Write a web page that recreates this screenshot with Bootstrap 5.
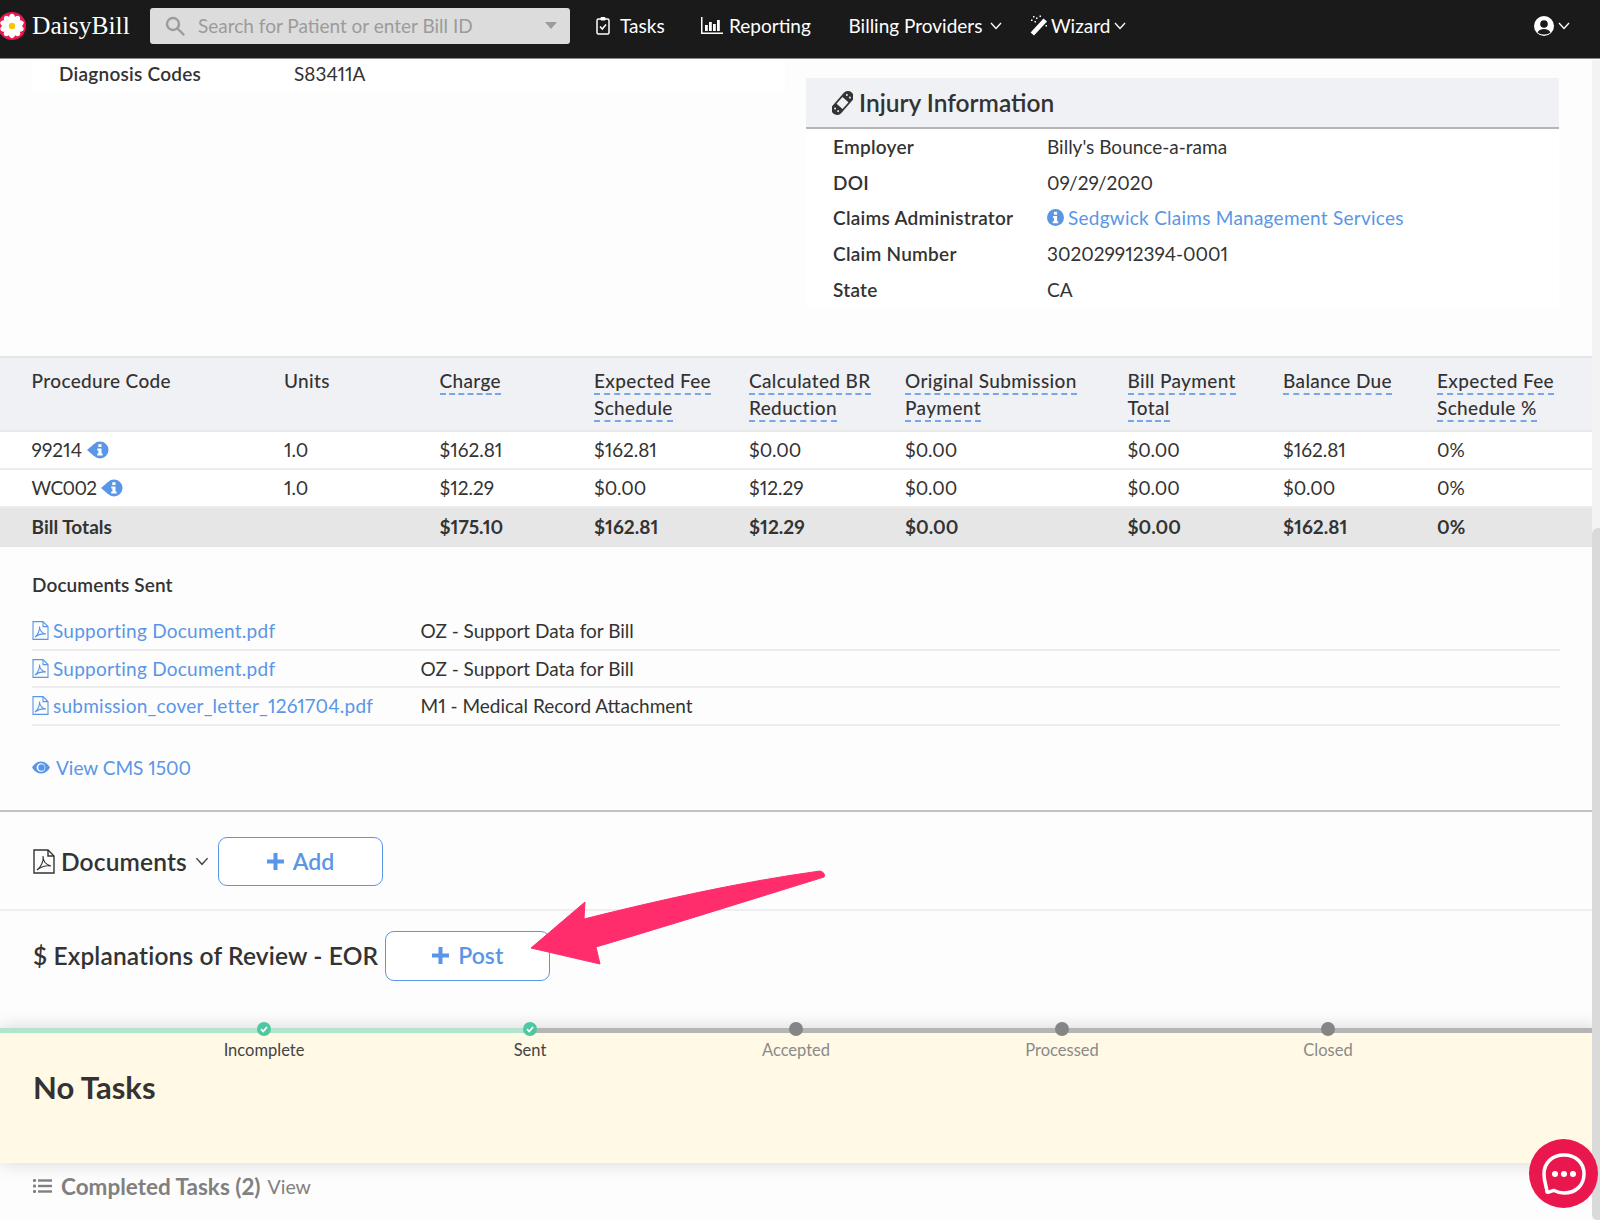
<!DOCTYPE html>
<html lang="en">
<head>
<meta charset="utf-8">
<title>DaisyBill</title>
<link href="https://cdn.jsdelivr.net/npm/bootstrap@5.3.0/dist/css/bootstrap.min.css" rel="stylesheet">
<style>
html,body{height:1220px;overflow:hidden}
body{position:relative;background:#fdfdfd;color:#333;font-family:"Lato","Liberation Sans",sans-serif;font-size:19px;line-height:27px;font-variant-numeric:proportional-nums}
a{color:#5a96e6;text-decoration:none}
svg{display:inline-block;flex:none}
.topbar{height:59px;background:#1a1a1a;border-bottom:1px solid #8a8a8a;padding:0 0 7px;color:#fff;flex-wrap:nowrap;justify-content:flex-start}
.brand-box{width:150px;height:100%}
.brand-box svg{margin-left:-2px}
.brand-name{font-family:"Liberation Serif",serif;font-size:25.5px;margin-left:6px;color:#fff}
.search-box{width:420px;height:36px;background:#dcdcdc;border-radius:3px;color:#9b9b9b;padding:0 13px 0 15px;margin-right:26px}
.search-box span{margin-left:13px}
.caret-down{margin-left:auto;width:0;height:0;border-left:6px solid transparent;border-right:6px solid transparent;border-top:7px solid #9b9b9b}
.nav-slot{color:#fff;height:100%}
.slot-tasks{width:105px}.slot-report{width:147.5px}.slot-billing{width:181.5px}.slot-wizard{width:120px}
.slot-user{margin-left:auto;margin-right:30px}
.nav-slot .lbl{margin-left:10px}
.nav-slot .lbl-tight{margin-left:6px}
.nav-slot .lbl-wand{margin-left:3px}
.band-top{height:297px;padding-left:32px}
.diag-box{width:753px;height:34px;background:#fff;padding:0 0 6px 27px;flex:none}
.diag-box b,.info-row b{font-weight:600;letter-spacing:.25px}
.diag-lab{width:235px}
.injury{width:753px;margin-left:21px;margin-top:19px;flex:none;background:#fff;height:230px}
.injury-head{height:51px;background:#f0f1f5;border-bottom:2px solid #b5b5b5;padding-left:26px;font-size:24.5px;font-weight:600}
.injury-head span{margin-left:6px}
.info-row{height:35.6px;padding-left:27px}
.info-lab{width:214px}
.info-link,.doc-name{letter-spacing:.25px}
.bill-table{table-layout:fixed;width:1592px;margin:0;--bs-table-bg:transparent;border-top:2px solid #e6e6e6;font-size:19px}
.bill-table th,.bill-table td{border:0;padding:0;color:#333}
.bill-table th{background:#f0f1f5;font-weight:500;padding-top:9px;height:74px;line-height:27px;vertical-align:top;border-bottom:2px solid #e8e8e8;letter-spacing:.35px}
.bill-table th:first-child,.bill-table td:first-child{padding-left:31.6px}
.bill-table td{background:#fff;height:38px;vertical-align:middle;border-bottom:2px solid #ececec;padding-bottom:2px}
.bill-table .totals-row td{background:#e6e6e6;font-weight:700;height:40px;border:0;color:#333}
.w-a{width:284px}.w-b{width:155.5px}.w-c{width:154.5px}.w-d{width:155px}.w-e{width:156px}.w-f{width:222.5px}.w-g{width:155.5px}.w-h{width:154px}.w-i{width:155px}
.dash{border-bottom:2px dashed #79a6ea;padding-bottom:1px}
.code-wc{letter-spacing:-.6px}
.info-tag{vertical-align:-2px}
.docs-sent{padding:24px 32px 0;height:264.5px;border-bottom:2px solid #bfc2c6}
.docs-title{font-weight:600;line-height:28px;margin-bottom:14px;letter-spacing:.1px}
.doc-row{width:1528px;height:37.6px;border-bottom:2px solid #ececec}
.doc-name{width:388.5px}
.doc-name svg{margin-right:4px}
.view-cms{margin-top:28px}
.view-cms svg{margin-right:6px}
.sec-docs{height:99px;padding:3px 0 0 33px;border-bottom:2px solid #efefef}
.sec-eor{height:117px;padding:20px 0 0 33px}
.sec-title{font-size:24.5px;font-weight:600;white-space:nowrap;letter-spacing:.15px}
.title-docs{margin-left:6px}
.chev-docs{margin:0 9px 0 8px;color:#444}
.eor-line{height:50px}
.btn-add{width:165px;height:49px;border:1.5px solid #5a96e6;border-radius:9px;color:#5a96e6;font-size:23px;font-weight:600;background:#fff;padding:0}
.btn-add:hover{color:#5a96e6;border-color:#5a96e6}
.btn-post{height:50px;margin-left:7px}
.btn-add svg{margin-right:9px}
.tasks-panel{height:135px;background:#fff9e6;box-shadow:0 0 18px rgba(0,0,0,.16)}
.tl-bar{height:5px;background:linear-gradient(90deg,#b3e5cc 530px,#b5b5b5 530px)}
.tl-steps{margin-top:-11px;padding-left:131px;width:1592px}
.tl-step{width:266px;font-size:16.5px;line-height:20px;color:#8a8a8a;text-align:center}
.tl-step.is-done{color:#444}
.tl-dot{display:block;width:14px;height:14px;border-radius:50%;background:#858585;margin:0 auto 4px}
.is-done .tl-dot{background:#4fc7a0}
.tasks-title{font-size:31px;font-weight:700;padding-left:33px;line-height:36px;margin-top:9px;color:#333}
.completed{padding:10px 0 0 33px;color:#808080}
.completed b{font-size:22.5px;font-weight:700;margin-left:9px}
.completed span{margin-left:7px;font-size:19.5px}
.scroll-track{position:absolute;right:0;top:60px;width:8px;height:1160px;background:#f3f3f3;z-index:3}
.scroll-thumb{position:absolute;right:0;top:468px;width:8px;height:692px;background:#dadada;border-radius:6px 0 0 6px}
.arrow-mark{position:absolute;left:0;top:0;z-index:4;pointer-events:none}
.chat-bubble{position:absolute;left:1529px;top:1139px;width:69px;height:69px;border-radius:50%;background:#ea174e;z-index:5}
</style>
</head>
<body>
<svg class="d-none" aria-hidden="true">
  <symbol id="flower" viewBox="0 0 28 28"><circle cx="14" cy="14" r="14" fill="#e8174e"/><g fill="#fff"><ellipse cx="14" cy="6.800" rx="3.300" ry="5"/><ellipse cx="14" cy="6.800" rx="3.300" ry="5" transform="rotate(36 14 14)"/><ellipse cx="14" cy="6.800" rx="3.300" ry="5" transform="rotate(72 14 14)"/><ellipse cx="14" cy="6.800" rx="3.300" ry="5" transform="rotate(108 14 14)"/><ellipse cx="14" cy="6.800" rx="3.300" ry="5" transform="rotate(144 14 14)"/><ellipse cx="14" cy="6.800" rx="3.300" ry="5" transform="rotate(180 14 14)"/><ellipse cx="14" cy="6.800" rx="3.300" ry="5" transform="rotate(216 14 14)"/><ellipse cx="14" cy="6.800" rx="3.300" ry="5" transform="rotate(252 14 14)"/><ellipse cx="14" cy="6.800" rx="3.300" ry="5" transform="rotate(288 14 14)"/><ellipse cx="14" cy="6.800" rx="3.300" ry="5" transform="rotate(324 14 14)"/></g><circle cx="14" cy="14" r="3.200" fill="#f7c600"/></symbol>
  <symbol id="chev" viewBox="0 0 12 8"><path d="M1 1 6 6.500 11 1" fill="none" stroke="currentColor" stroke-width="1.300"/></symbol>
  <symbol id="pdf" viewBox="0 0 17 19"><g fill="none" stroke="#5a96e6" stroke-width="1.100"><path d="M1 .6h10l5 5v12.800H1z"/><path d="M11 .6v5h5"/><path d="M3 16c3-2 5-7 4.500-10.500C7.300 9 10 12.500 14 13c-4-.5-8 .5-11 3z"/></g></symbol>
  <symbol id="info-tag" viewBox="0 0 22 18"><circle cx="13" cy="9" r="8.500" fill="#5a96e6"/><path d="M0 9 7 3v12z" fill="#5a96e6"/><rect x="11.300" y="3.200" width="3.200" height="2.800" fill="#fff"/><path d="M10.300 7.500h4.200v5h1.100v1.900h-5.400v-1.900h1.200V9.400h-1.100z" fill="#fff"/></symbol>
  <symbol id="plus" viewBox="0 0 17 17"><path fill="#5a96e6" d="M6.500 0h4v6.500H17v4h-6.500V17h-4v-6.500H0v-4h6.500z"/></symbol>
  <symbol id="tick" viewBox="0 0 14 14"><path d="M4 7.200 6.200 9.500 10 5" fill="none" stroke="#fff" stroke-width="1.800"/></symbol>
</svg>

<nav class="navbar topbar d-flex align-items-center">
  <div class="brand-box d-flex align-items-center">
    <svg width="28" height="28"><use href="#flower"/></svg>
    <span class="brand-name">DaisyBill</span>
  </div>
  <div class="search-box d-flex align-items-center">
    <svg width="20" height="20" viewBox="0 0 20 20" fill="none" stroke="#9b9b9b" stroke-width="2.400"><circle cx="8" cy="8" r="6"/><path d="M12.500 12.500 18.500 18.500" stroke-linecap="round"/></svg>
    <span>Search for Patient or enter Bill ID</span>
    <i class="caret-down"></i>
  </div>
  <a class="nav-slot slot-tasks d-flex align-items-center" href="#">
    <svg width="14" height="19" viewBox="0 0 14 19" fill="none" stroke="#fff" stroke-width="1.500"><rect x="1" y="3" width="12" height="15" rx="1.500"/><rect x="4.500" y="1" width="5" height="3.500" rx="1" fill="#fff" stroke="none"/><path d="M4 10.500 6.300 13 10 8.500"/></svg>
    <span class="lbl">Tasks</span>
  </a>
  <a class="nav-slot slot-report d-flex align-items-center" href="#">
    <svg width="22" height="17" viewBox="0 0 22 17" fill="#fff"><rect x="0" y="0" width="1.500" height="17"/><rect x="0" y="15.500" width="22" height="1.500"/><rect x="4" y="8" width="2.800" height="6"/><rect x="8" y="5" width="2.800" height="9"/><rect x="12" y="7" width="2.800" height="7"/><rect x="16" y="3" width="2.800" height="11"/></svg>
    <span class="lbl-tight">Reporting</span>
  </a>
  <a class="nav-slot slot-billing d-flex align-items-center" href="#">
    <span>Billing Providers</span>
    <svg class="ms-2" width="12" height="8"><use href="#chev"/></svg>
  </a>
  <a class="nav-slot slot-wizard d-flex align-items-center" href="#">
    <svg width="18" height="21" viewBox="0 0 18 21" fill="#fff"><path d="M13.500 3.500 17 6.500 4 20.500 .6 17.500Z"/><path d="M3 1h1.500v1.500H3zM6 2.500h1.500V4H6zM9.500.5H11V2H9.500zM1 4.500h1.500V6H1zM4.500 6H6v1.500H4.500zM15.500 10h1.500v1.500h-1.500z"/></svg>
    <span class="lbl-wand">Wizard</span>
    <svg class="ms-1" width="12" height="8"><use href="#chev"/></svg>
  </a>
  <a class="nav-slot slot-user d-flex align-items-center" href="#" aria-label="Account">
    <svg width="20" height="20" viewBox="0 0 20 20"><circle cx="10" cy="10" r="10" fill="#fff"/><circle cx="10" cy="8" r="3.800" fill="#1a1a1a"/><path d="M3.500 16.500C5 13.500 7.500 13 10 13s5 .5 6.500 3.500A9 9 0 0 1 10 18.500a9 9 0 0 1-6.500-2Z" fill="#1a1a1a"/></svg>
    <svg class="ms-1" width="12" height="8"><use href="#chev"/></svg>
  </a>
</nav>

<main>
  <section class="band-top d-flex align-items-start">
    <div class="diag-box d-flex align-items-center">
      <b class="diag-lab">Diagnosis Codes</b><span>S83411A</span>
    </div>
    <div class="injury">
      <div class="injury-head d-flex align-items-center">
        <svg width="21" height="24" viewBox="0 0 21 24"><g transform="rotate(41 10.500 12)"><rect x="4.800" y="-2" width="11.400" height="28" rx="5.700" fill="#333"/><rect x="6.500" y="7.500" width="8" height="9" fill="#f0f1f5"/><g fill="#f0f1f5"><circle cx="8.500" cy="3" r="1"/><circle cx="12.500" cy="3" r="1"/><circle cx="8.500" cy="21" r="1"/><circle cx="12.500" cy="21" r="1"/></g></g></svg>
        <span>Injury Information</span>
      </div>
      <div>
        <div class="info-row d-flex align-items-center"><b class="info-lab">Employer</b><span>Billy's Bounce-a-rama</span></div>
        <div class="info-row d-flex align-items-center"><b class="info-lab">DOI</b><span>09/29/2020</span></div>
        <div class="info-row d-flex align-items-center"><b class="info-lab">Claims Administrator</b><a href="#" class="info-link d-flex align-items-center"><svg class="me-1" width="17" height="17" viewBox="0 0 18 18"><circle cx="9" cy="9" r="9" fill="#5a96e6"/><rect x="7.300" y="3" width="3.400" height="3" fill="#fff"/><path d="M6.300 7.500h4.400v5.500h1.200v2H6.100v-2h1.300V9.500H6.300z" fill="#fff"/></svg>Sedgwick Claims Management Services</a></div>
        <div class="info-row d-flex align-items-center"><b class="info-lab">Claim Number</b><span>302029912394-0001</span></div>
        <div class="info-row d-flex align-items-center"><b class="info-lab">State</b><span>CA</span></div>
      </div>
    </div>
  </section>

  <table class="table bill-table">
    <thead><tr>
      <th class="w-a">Procedure Code</th><th class="w-b">Units</th>
      <th class="w-c"><span class="dash">Charge</span></th>
      <th class="w-d"><span class="dash">Expected Fee</span><br><span class="dash">Schedule</span></th>
      <th class="w-e"><span class="dash">Calculated BR</span><br><span class="dash">Reduction</span></th>
      <th class="w-f"><span class="dash">Original Submission</span><br><span class="dash">Payment</span></th>
      <th class="w-g"><span class="dash">Bill Payment</span><br><span class="dash">Total</span></th>
      <th class="w-h"><span class="dash">Balance Due</span></th>
      <th class="w-i"><span class="dash">Expected Fee</span><br><span class="dash">Schedule %</span></th>
    </tr></thead>
    <tbody>
      <tr><td>99214 <svg width="22" height="18" class="info-tag"><use href="#info-tag"/></svg></td><td>1.0</td><td>$162.81</td><td>$162.81</td><td>$0.00</td><td>$0.00</td><td>$0.00</td><td>$162.81</td><td>0%</td></tr>
      <tr><td><span class="code-wc">WC002</span> <svg width="22" height="18" class="info-tag"><use href="#info-tag"/></svg></td><td>1.0</td><td>$12.29</td><td>$0.00</td><td>$12.29</td><td>$0.00</td><td>$0.00</td><td>$0.00</td><td>0%</td></tr>
      <tr class="totals-row"><td>Bill Totals</td><td></td><td>$175.10</td><td>$162.81</td><td>$12.29</td><td>$0.00</td><td>$0.00</td><td>$162.81</td><td>0%</td></tr>
    </tbody>
  </table>

  <section class="docs-sent">
    <div class="docs-title">Documents Sent</div>
    <div class="doc-row d-flex align-items-center"><a href="#" class="doc-name d-flex align-items-center"><svg width="17" height="19"><use href="#pdf"/></svg>Supporting Document.pdf</a><span>OZ - Support Data for Bill</span></div>
    <div class="doc-row d-flex align-items-center"><a href="#" class="doc-name d-flex align-items-center"><svg width="17" height="19"><use href="#pdf"/></svg>Supporting Document.pdf</a><span>OZ - Support Data for Bill</span></div>
    <div class="doc-row d-flex align-items-center"><a href="#" class="doc-name d-flex align-items-center"><svg width="17" height="19"><use href="#pdf"/></svg>submission_cover_letter_1261704.pdf</a><span>M1 - Medical Record Attachment</span></div>
    <a href="#" class="view-cms d-inline-flex align-items-center"><svg width="18" height="13" viewBox="0 0 18 13"><path d="M0 6.500C2.500 2.500 5.500.5 9 .5s6.500 2 9 6c-2.500 4-5.500 6-9 6s-6.500-2-9-6z" fill="#5a96e6"/><circle cx="9" cy="6.500" r="4.300" fill="#fff"/><circle cx="9.500" cy="6.500" r="3.200" fill="#5a96e6"/></svg>View CMS 1500</a>
  </section>

  <section class="sec-docs d-flex align-items-center">
    <svg width="22" height="25" viewBox="0 0 22 25" fill="none" stroke="#333" stroke-width="1.400"><path d="M1 1h14l6 6v17H1z"/><path d="M15 1v6h6"/><path d="M4 21c4-3 7-9 6-14-.3 5 3 9 8 10-5-1-10 1-14 4z" stroke-width="1.100"/></svg>
    <span class="sec-title title-docs">Documents</span>
    <svg class="chev-docs" width="14" height="9"><use href="#chev"/></svg>
    <button class="btn btn-add d-flex align-items-center justify-content-center" type="button"><svg width="17" height="17"><use href="#plus"/></svg>Add</button>
  </section>

  <section class="sec-eor d-flex align-items-start">
    <span class="sec-title eor-line d-flex align-items-center">$ Explanations of Review - EOR</span>
    <button class="btn btn-add btn-post d-flex align-items-center justify-content-center" type="button"><svg width="17" height="17"><use href="#plus"/></svg>Post</button>
  </section>

  <section class="tasks-panel">
    <div class="tl-bar"></div>
    <div class="tl-steps d-flex">
      <div class="tl-step is-done"><span class="tl-dot"><svg class="d-block" width="14" height="14"><use href="#tick"/></svg></span>Incomplete</div>
      <div class="tl-step is-done"><span class="tl-dot"><svg class="d-block" width="14" height="14"><use href="#tick"/></svg></span>Sent</div>
      <div class="tl-step"><span class="tl-dot"></span>Accepted</div>
      <div class="tl-step"><span class="tl-dot"></span>Processed</div>
      <div class="tl-step"><span class="tl-dot"></span>Closed</div>
    </div>
    <h2 class="tasks-title mb-0">No Tasks</h2>
  </section>

  <section class="completed d-flex align-items-center">
    <svg width="19" height="14" viewBox="0 0 19 14" fill="#808080"><rect x="0" y="0" width="3" height="3" rx="1"/><rect x="0" y="5.500" width="3" height="3" rx="1"/><rect x="0" y="11" width="3" height="3" rx="1"/><rect x="5" y=".3" width="14" height="2.400"/><rect x="5" y="5.800" width="14" height="2.400"/><rect x="5" y="11.300" width="14" height="2.400"/></svg>
    <b>Completed Tasks (2)</b><span>View</span>
  </section>
</main>

<div class="scroll-track"><div class="scroll-thumb"></div></div>

<svg class="arrow-mark" width="1600" height="1220" viewBox="0 0 1600 1220" aria-hidden="true"><path d="M531 948 585 902 584 919C660 900 740 882 820 871Q826 873 824 877C750 900 670 925 596 947L600 964Z" fill="#ff2d6b" stroke="#ff2d6b" stroke-width="1" stroke-linejoin="round"/></svg>

<div class="chat-bubble d-flex align-items-center justify-content-center">
  <svg width="46" height="44" viewBox="0 0 46 44" fill="none"><path d="M6 40C6 36 3 30 3 22 3 11 11 3 23 3s20 8 20 19-8 19-20 19c-4 0-7-1-10-2.500C11 38 9 41 6 40Z" stroke="#fff" stroke-width="3.500" stroke-linejoin="round"/><circle cx="14" cy="22" r="3" fill="#fff"/><circle cx="23" cy="22" r="3" fill="#fff"/><circle cx="32" cy="22" r="3" fill="#fff"/></svg>
</div>

<script src="https://cdn.jsdelivr.net/npm/bootstrap@5.3.0/dist/js/bootstrap.bundle.min.js"></script>
</body>
</html>
